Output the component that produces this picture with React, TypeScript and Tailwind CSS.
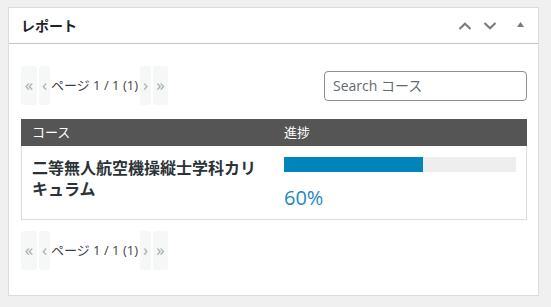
import React from "react";

const font = { fontFamily: '"Open Sans", "Noto Sans CJK JP", sans-serif' };

function Pager() {
  return (
    <div className="flex items-center h-[39px]">
      <div className="w-[16px] h-[39px] bg-[#f6f7f7] rounded-[3px] flex items-center justify-center text-[#a7aaad] text-[17px] leading-none pb-[2px]">«</div>
      <div className="ml-[2px] w-[11px] h-[39px] bg-[#f6f7f7] rounded-[3px] flex items-center justify-center text-[#a7aaad] text-[17px] leading-none pb-[2px]">‹</div>
      <div className="ml-[1px] text-[13px] text-[#3c434a] whitespace-nowrap leading-[39px]">ページ 1 / 1 (1)</div>
      <div className="ml-[2px] w-[11px] h-[39px] bg-[#f6f7f7] rounded-[3px] flex items-center justify-center text-[#a7aaad] text-[17px] leading-none pb-[2px]">›</div>
      <div className="ml-[2px] w-[15px] h-[39px] bg-[#f6f7f7] rounded-[3px] flex items-center justify-center text-[#a7aaad] text-[17px] leading-none pb-[2px]">»</div>
    </div>
  );
}

export default function App() {
  return (
    <div className="w-[551px] h-[307px] bg-[#f0f0f1] pt-[7px] pl-[8px] overflow-hidden" style={font}>
      <div className="w-[531px] bg-white border border-[#dcdcde]">
        <div className="h-[36px] border-b border-[#c3c4c7] flex items-center justify-between pl-[12px] pr-[14px]">
          <div className="text-[14px] font-semibold text-[#1d2327]">レポート</div>
          <div className="flex items-center">
            <svg width="14" height="8" viewBox="0 0 14 8" className="mt-[1px]">
              <polyline points="1.5,7 7,1.8 12.5,7" fill="none" stroke="#787c82" strokeWidth="2.2" />
            </svg>
            <svg width="14" height="8" viewBox="0 0 14 8" className="ml-[11px] mt-[1px]">
              <polyline points="1.5,1 7,6.2 12.5,1" fill="none" stroke="#787c82" strokeWidth="2.2" />
            </svg>
            <svg width="7" height="5" viewBox="0 0 7 5" className="ml-[20px] mb-[3px]">
              <polygon points="0,5 3.5,0 7,5" fill="#787c82" />
            </svg>
          </div>
        </div>
        <div className="pl-[12px] pr-[11px] pt-[22px] pb-[25px]">
          <div className="flex items-center justify-between">
            <Pager />
            <input
              className="w-[203px] h-[30px] border border-[#8c8f94] rounded-[4px] px-[8px] text-[14px] text-[#2c3338] placeholder:text-[#646970] outline-none"
              placeholder="Search コース"
              style={font}
            />
          </div>
          <div className="mt-[14px]">
            <div className="grid grid-cols-[252px_1fr] bg-[#555555] h-[27px] text-white text-[13px] leading-[27px]">
              <div className="pl-[11px]">コース</div>
              <div className="pl-[11px]">進捗</div>
            </div>
            <div className="grid grid-cols-[252px_1fr] border border-t-0 border-[#dcdcde]">
              <div className="pl-[10px] pr-[8px] pt-[12px] text-[16px] font-bold leading-[21px] text-[#2c3338]">
                二等無人航空機操縦士学科カリキュラム
              </div>
              <div className="pl-[10px] pr-[10px] pt-[11px] pb-[7px]">
                <div className="h-[15px] bg-[#eeeeee] w-[232px]">
                  <div className="h-full bg-[#0085ba]" style={{ width: "60%" }} />
                </div>
                <div className="mt-[12px] text-[20px] leading-[28px] text-[#1e87c0]">60%</div>
              </div>
            </div>
          </div>
          <div className="mt-[11px]">
            <Pager />
          </div>
        </div>
      </div>
    </div>
  );
}
